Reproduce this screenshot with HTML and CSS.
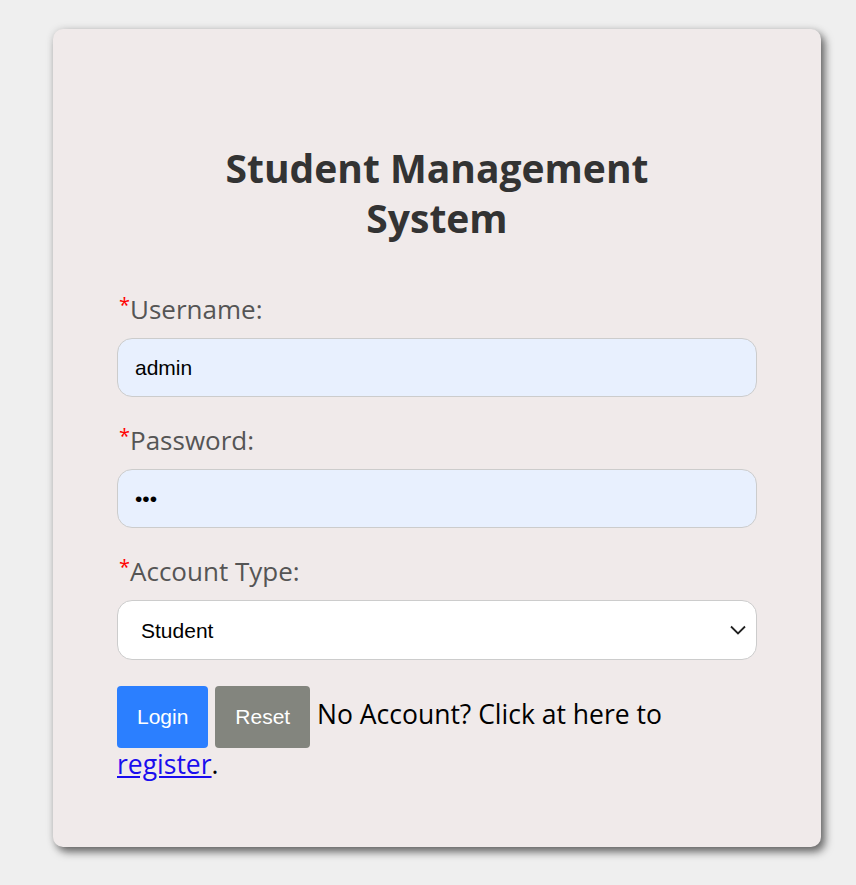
FILE: index.html
```html
<!DOCTYPE html>
<html lang="en">
<head>
    <meta charset="UTF-8">
    <meta name="viewport" content="width=device-width, initial-scale=1.0">
    <title>Student Management System</title>
    <link rel="stylesheet" href="styles.css">
</head>
<body>
    <div class="container">
        <h2 class="title">Student Management System</h2>
        <form>
            <div class="form-group">
                <label for="username"><span class="required">*</span>Username:</label>
                <input type="text" id="username" name="username" class="form-control filled" value="admin">
            </div>
            <div class="form-group">
                <label for="password"><span class="required">*</span>Password:</label>
                <input type="password" id="password" name="password" class="form-control filled" value="123">
            </div>
            <div class="form-group last">
                <label for="type"><span class="required">*</span>Account Type:</label>
                <select id="type" name="type" class="form-control select">
                    <option>Student</option>
                    <option>Teacher</option>
                    <option>Admin</option>
                </select>
            </div>
            <div class="actions">
                <button type="submit" class="btn btn-primary">Login</button>
                <button type="reset" class="btn btn-secondary">Reset</button>
                No Account? Click at here to <a href="#">register</a>.
            </div>
        </form>
    </div>
</body>
</html>
```

FILE: styles.css
```css
body {
    margin: 0;
    padding: 29px 0 38px 53px;
    font-family: "Open Sans", "Noto Sans", sans-serif;
    background-color: #efefef;
}

.container {
    width: 640px;
    padding: 64px 64px 67px;
    background-color: #f0eaea;
    border-radius: 10px;
    box-shadow: 0 0 8px rgba(0,0,0,0.12), 4px 5px 9px rgba(0,0,0,0.55);
}

.title {
    max-width: 480px;
    margin: 50px auto 50px;
    font-size: 39px;
    line-height: 50px;
    font-weight: bold;
    color: #333;
    text-align: center;
}

.form-group {
    margin-bottom: 27px;
}

.form-group.last {
    margin-bottom: 26px;
}

.form-group label {
    display: block;
    margin-bottom: 13px;
    font-size: 26px;
    line-height: 32px;
    color: #555;
}

.required {
    display: inline-block;
    margin-left: 2px;
    font-size: 20px;
    line-height: 24px;
    vertical-align: top;
    color: #f00;
}

.form-control {
    display: block;
    width: 100%;
    height: 59px;
    padding: 0 17px;
    box-sizing: border-box;
    border: 1px solid #ccc;
    border-radius: 15px;
    font-family: "Liberation Sans", Arial, sans-serif;
    font-size: 21px;
    color: #000;
    background-color: #fff;
    outline: none;
}

.filled {
    background-color: #e8f0fe;
}

.select {
    height: 60px;
    padding-left: 23px;
    appearance: none;
    -webkit-appearance: none;
    background-image: url("data:image/svg+xml,%3Csvg xmlns='http://www.w3.org/2000/svg' width='16' height='10' viewBox='0 0 16 10'%3E%3Cpath d='M1 1.5l7 7 7-7' fill='none' stroke='%23222' stroke-width='1.8'/%3E%3C/svg%3E");
    background-repeat: no-repeat;
    background-position: right 10px center;
}

.actions {
    font-size: 26.5px;
    line-height: 32px;
    color: #000;
}

.actions a {
    color: #1a0dee;
}

.btn {
    padding: 19px 20px;
    border: none;
    border-radius: 4px;
    font-family: "Liberation Sans", Arial, sans-serif;
    font-size: 21px;
    line-height: 24px;
    color: #fff;
    cursor: pointer;
}

.btn-primary {
    background-color: #2b7fff;
}

.btn-secondary {
    background-color: #83857e;
}
```
